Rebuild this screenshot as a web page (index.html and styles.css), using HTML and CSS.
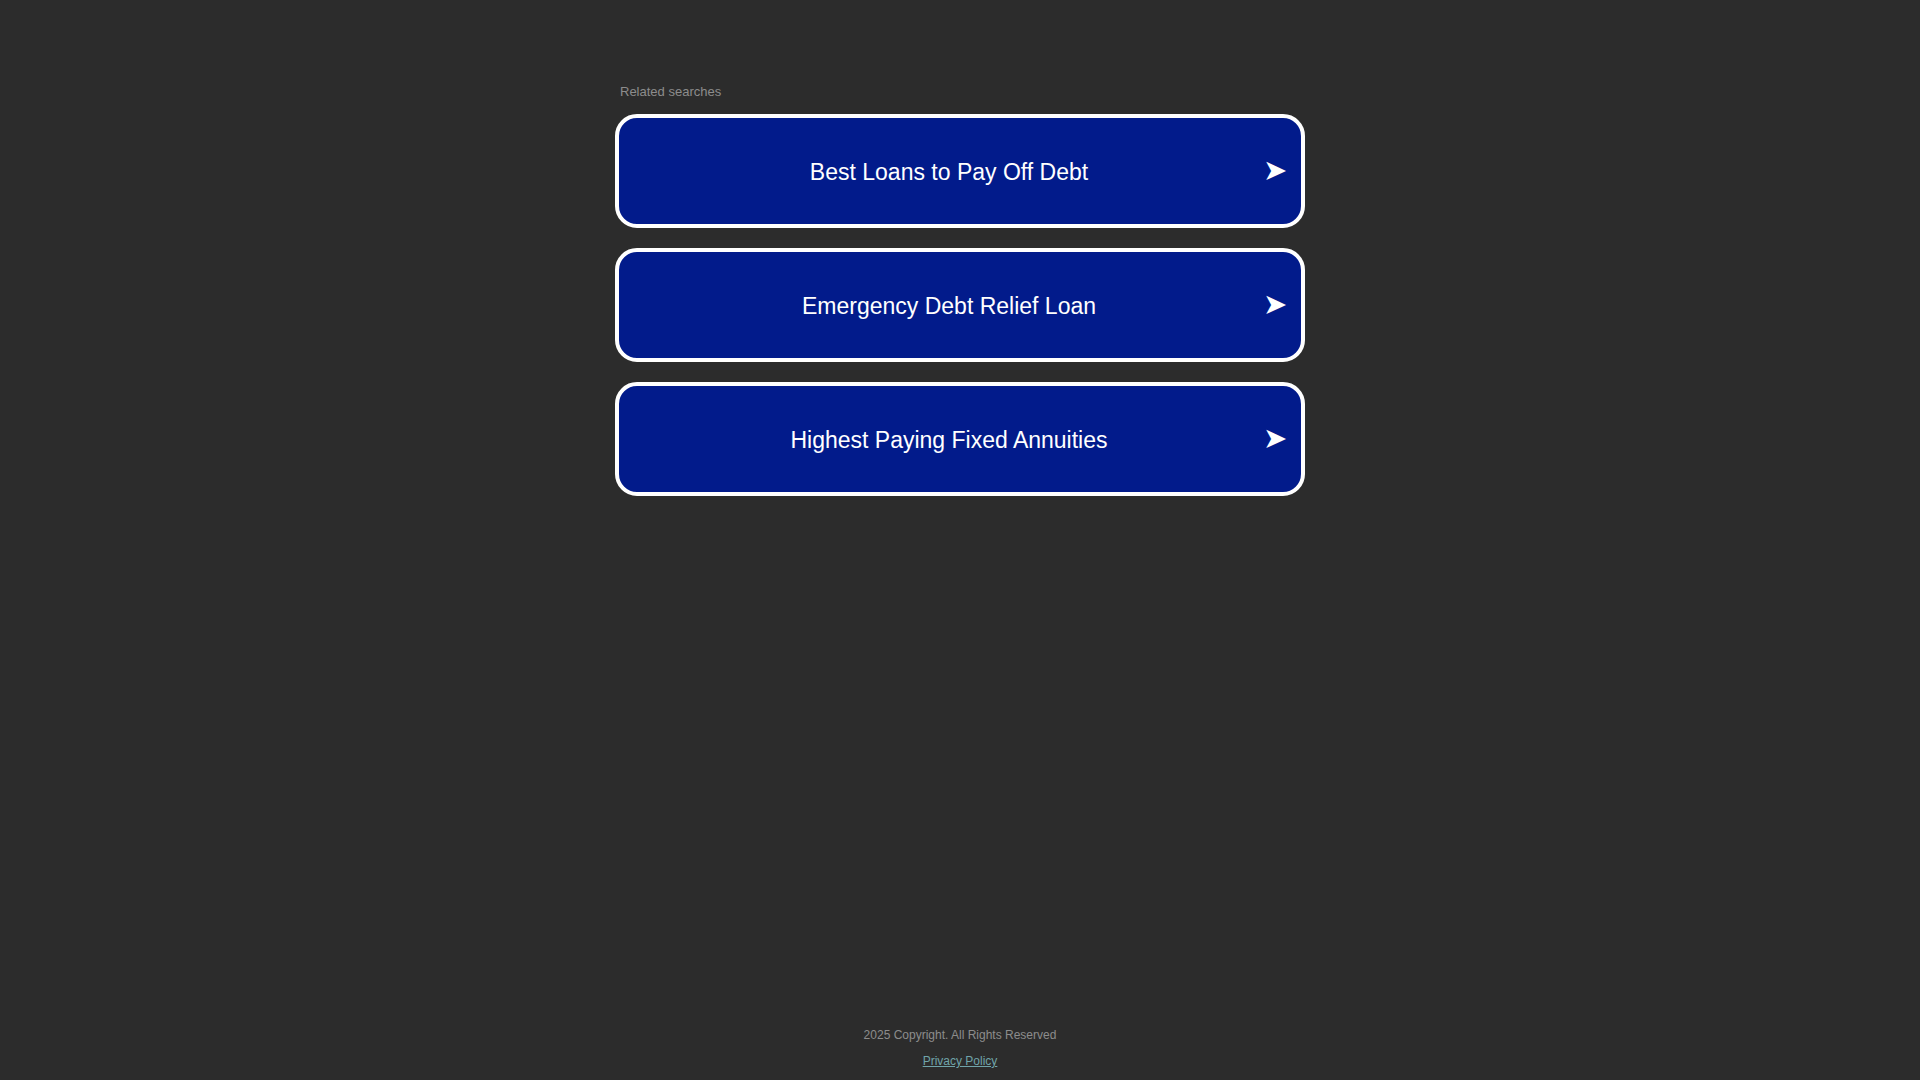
FILE: index.html
```html
<!DOCTYPE html>
<html lang="en">
<head>
<meta charset="utf-8">
<title>Related searches</title>
<link rel="stylesheet" href="styles.css">
</head>
<body>
<div class="page">
  <main class="content">
    <div class="label">Related searches</div>
    <ul class="ads">
      <li><a class="ad" href="#"><span class="ad-text">Best Loans to Pay Off Debt</span><span class="ad-arrow">➤</span></a></li>
      <li><a class="ad" href="#"><span class="ad-text">Emergency Debt Relief Loan</span><span class="ad-arrow">➤</span></a></li>
      <li><a class="ad" href="#"><span class="ad-text">Highest Paying Fixed Annuities</span><span class="ad-arrow">➤</span></a></li>
    </ul>
  </main>
  <footer class="footer">
    <div class="copyright">2025 Copyright. All Rights Reserved</div>
    <a class="privacy" href="#">Privacy Policy</a>
  </footer>
</div>
</body>
</html>
```

FILE: styles.css
```css
html, body {
  margin: 0;
  padding: 0;
  background: #2c2c2c;
}

body {
  font-family: "Liberation Sans", Arial, sans-serif;
}

.page {
  min-height: 100vh;
  display: flex;
  flex-direction: column;
  box-sizing: border-box;
}

.content {
  width: 690px;
  margin: 0 auto;
  padding-top: 84px;
}

.label {
  font-size: 13px;
  line-height: 16px;
  color: #8c8c8c;
  padding-left: 5px;
  margin-bottom: 14px;
}

.ads {
  list-style: none;
  margin: 0;
  padding: 0;
  display: flex;
  flex-direction: column;
  gap: 20px;
}

.ad {
  display: flex;
  align-items: center;
  height: 114px;
  box-sizing: border-box;
  border: 4px solid #ffffff;
  border-radius: 22px;
  background: #021b8b;
  color: #ffffff;
  text-decoration: none;
  padding: 0 14px 0 16px;
}

.ad-text {
  flex: 1;
  text-align: center;
  font-size: 23px;
  line-height: 28px;
  padding-top: 1px;
}

.ad-arrow {
  width: 24px;
  font-family: "DejaVu Sans", sans-serif;
  font-size: 29px;
  line-height: 28px;
  text-align: right;
  padding-bottom: 2px;
}

.footer {
  margin-top: auto;
  padding-bottom: 11px;
  display: flex;
  flex-direction: column;
  align-items: center;
  gap: 10px;
  font-size: 12px;
  line-height: 16px;
}

.copyright {
  color: #8c8c8c;
}

.privacy {
  color: #70a4aa;
  text-decoration: underline;
}
```
